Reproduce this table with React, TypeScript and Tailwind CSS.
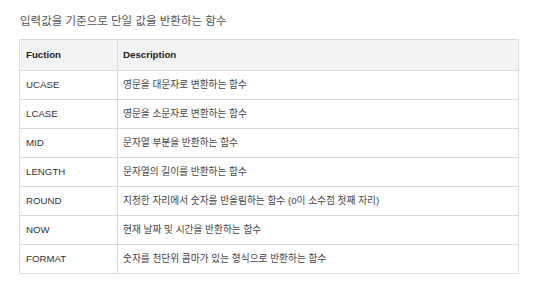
import React from 'react';

const rows = [
  { name: 'UCASE', desc: '영문을 대문자로 변환하는 함수' },
  { name: 'LCASE', desc: '영문을 소문자로 변환하는 함수' },
  { name: 'MID', desc: '문자열 부분을 반환하는 함수' },
  { name: 'LENGTH', desc: '문자열의 길이를 반환하는 함수' },
  { name: 'ROUND', desc: '지정한 자리에서 숫자를 반올림하는 함수 (0이 소수점 첫째 자리)' },
  { name: 'NOW', desc: '현재 날짜 및 시간을 반환하는 함수' },
  { name: 'FORMAT', desc: '숫자를 천단위 콤마가 있는 형식으로 반환하는 함수' },
];

export default function App() {
  return (
    <div
      className="w-[536px] h-[286px] bg-white px-[19px] pt-[12px] text-[#333]"
      style={{ fontFamily: '"Liberation Sans", "Noto Sans CJK KR", sans-serif' }}
    >
      <p className="text-[11.5px] leading-[18px] text-[#555] pl-[1px]">입력값을 기준으로 단일 값을 반환하는 함수</p>

      <table className="mt-[9px] w-[500px] border-collapse border border-[#dcdcdc] text-[9.7px]">
        <thead>
          <tr className="bg-[#f3f3f5] h-[31px]">
            <th className="w-[98px] border border-[#dcdcdc] pl-[6px] text-left font-bold text-[#222]">Fuction</th>
            <th className="border border-[#dcdcdc] pl-[5px] text-left font-bold text-[#222]">Description</th>
          </tr>
        </thead>
        <tbody>
          {rows.map((r) => (
            <tr key={r.name} className="h-[29px]">
              <td className="border border-[#dcdcdc] pl-[6px] text-[#333]">{r.name}</td>
              <td className="border border-[#dcdcdc] pl-[5px] text-[#444]">{r.desc}</td>
            </tr>
          ))}
        </tbody>
      </table>
    </div>
  );
}
